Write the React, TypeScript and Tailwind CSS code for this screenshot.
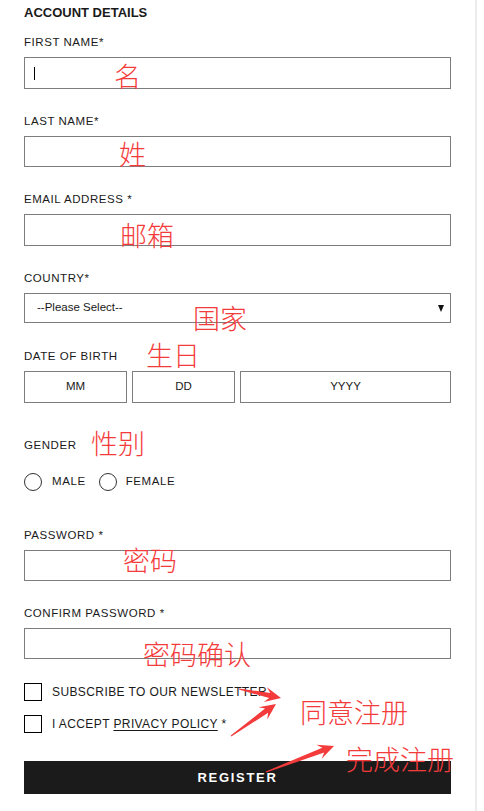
import React from "react";

type Pt = [number, number];

function arrowPoints(t: Pt, p: Pt, h = 16, w = 7.5, s = 2.6, tail = 0.6): string {
  const dx = p[0] - t[0];
  const dy = p[1] - t[1];
  const L = Math.hypot(dx, dy);
  const ux = dx / L;
  const uy = dy / L;
  const nx = -uy;
  const ny = ux;
  const neck: Pt = [p[0] - ux * h * 0.72, p[1] - uy * h * 0.72];
  const base: Pt = [p[0] - ux * h, p[1] - uy * h];
  const pts: Pt[] = [
    [t[0] + nx * tail, t[1] + ny * tail],
    [neck[0] + nx * s, neck[1] + ny * s],
    [base[0] + nx * w, base[1] + ny * w],
    p,
    [base[0] - nx * w, base[1] - ny * w],
    [neck[0] - nx * s, neck[1] - ny * s],
    [t[0] - nx * tail, t[1] - ny * tail],
  ];
  return pts.map((q) => `${q[0].toFixed(1)},${q[1].toFixed(1)}`).join(" ");
}

const label =
  "block text-[11.5px] leading-[12px] tracking-[0.55px] uppercase text-[#1a1a1a]";
const box = "border border-[#7d7d7d] bg-white";

function Field({ text, mt, h }: { text: string; mt: string; h: string }) {
  return (
    <div className={mt}>
      <span className={label}>{text}</span>
      <div className={`mt-[9px] ${box} ${h}`} />
    </div>
  );
}

const note =
  "absolute text-[27px] leading-[27px] font-light text-[#f43b3b] whitespace-nowrap font-['Noto_Sans_CJK_SC','Noto_Sans_CJK_JP',sans-serif]";

export default function App() {
  return (
    <div className="relative w-[477px] min-h-[811px] border-r-2 border-[#ececec] bg-white pl-6 pr-6 pt-[5px] font-['Liberation_Sans',Arial,sans-serif] text-[#1a1a1a]">
      <h2 className="text-[13px] leading-[16px] font-bold">ACCOUNT DETAILS</h2>

      <div className="mt-[15px]">
        <span className={label}>First Name*</span>
        <div className={`mt-[9px] ${box} h-[32px] flex items-center pl-[9px]`}>
          <span className="block w-px h-[13px] bg-black" />
        </div>
      </div>

      <Field text="Last Name*" mt="mt-[26px]" h="h-[31px]" />
      <Field text="Email Address *" mt="mt-[26px]" h="h-[32px]" />

      <div className="mt-[26px]">
        <span className={label}>Country*</span>
        <div className={`mt-[9px] ${box} h-[30px] flex items-center justify-between pl-[12px] pr-[6px]`}>
          <span className="text-[11.5px] leading-none text-[#1a1a1a]">--Please Select--</span>
          <svg width="6" height="7" viewBox="0 0 6 7">
            <polygon points="0,0 6,0 3,7" fill="#111" />
          </svg>
        </div>
      </div>

      <div className="mt-[27px]">
        <span className={label}>Date of Birth</span>
        <div className="mt-[9px] flex gap-[5px]">
          <div className={`${box} h-[32px] w-[103px] flex items-center justify-center text-[11.5px]`}>MM</div>
          <div className={`${box} h-[32px] w-[103px] flex items-center justify-center text-[11.5px]`}>DD</div>
          <div className={`${box} h-[32px] flex-1 flex items-center justify-center text-[11.5px]`}>YYYY</div>
        </div>
      </div>

      <div className="mt-[36px]">
        <span className={label}>Gender</span>
        <div className="mt-[22px] flex items-center h-[18px]">
          <span className="block w-[18px] h-[18px] rounded-full border-[1.5px] border-[#333]" />
          <span className="ml-[10px] text-[11.5px] tracking-[0.6px] leading-none">MALE</span>
          <span className="ml-[13px] block w-[18px] h-[18px] rounded-full border-[1.5px] border-[#333]" />
          <span className="ml-[9px] text-[11.5px] tracking-[0.6px] leading-none">FEMALE</span>
        </div>
      </div>

      <Field text="Password *" mt="mt-[38px]" h="h-[31px]" />
      <Field text="Confirm Password *" mt="mt-[26px]" h="h-[31px]" />

      <div className="mt-[24px] flex items-center h-[18px]">
        <span className="block w-[18px] h-[18px] border-[1.5px] border-black" />
        <span className="ml-[10px] text-[12px] tracking-[0.4px] leading-none">SUBSCRIBE TO OUR NEWSLETTER</span>
      </div>
      <div className="mt-[14px] flex items-center h-[18px]">
        <span className="block w-[18px] h-[18px] border-[1.5px] border-black" />
        <span className="ml-[10px] text-[12px] tracking-[0.4px] leading-none">
          I ACCEPT <span className="underline underline-offset-[2px]">PRIVACY POLICY</span> *
        </span>
      </div>

      <button className="mt-[28px] w-full h-[33px] bg-[#1b1b1b] text-white text-[13px] font-bold tracking-[1.7px] flex items-center justify-center">
        REGISTER
      </button>

      {/* annotations */}
      <span className={note} style={{ left: 114, top: 62 }}>名</span>
      <span className={note} style={{ left: 119, top: 140 }}>姓</span>
      <span className={note} style={{ left: 120, top: 221 }}>邮箱</span>
      <span className={note} style={{ left: 193, top: 304 }}>国家</span>
      <span className={note} style={{ left: 146, top: 341 }}>生日</span>
      <span className={note} style={{ left: 91, top: 429 }}>性别</span>
      <span className={note} style={{ left: 123, top: 546 }}>密码</span>
      <span className={note} style={{ left: 143, top: 640 }}>密码确认</span>
      <span className={note} style={{ left: 300, top: 698 }}>同意注册</span>
      <span className={note} style={{ left: 346, top: 745 }}>完成注册</span>

      <svg className="absolute left-0 top-0 pointer-events-none" width="484" height="811">
        <polygon points={arrowPoints([239, 689], [281, 698])} fill="#f43b3b" />
        <polygon points={arrowPoints([231, 736], [276, 704])} fill="#f43b3b" />
        <polygon points={arrowPoints([266, 772], [334, 746])} fill="#f43b3b" />
      </svg>
    </div>
  );
}
